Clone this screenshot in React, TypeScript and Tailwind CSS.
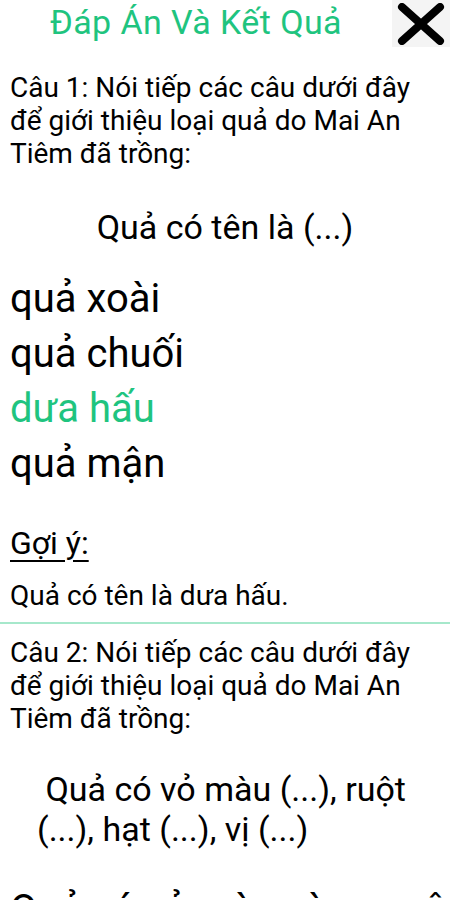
const options = ["quả xoài", "quả chuối", "dưa hấu", "quả mận"];
const correct = "dưa hấu";

function CloseIcon() {
  return (
    <div className="flex h-[47px] w-[58px] items-center justify-center bg-[#f4f4f4]">
      <svg width="50" height="42" viewBox="0 0 50 42">
        <path
          d="M6 4 L44 38 M44 4 L6 38"
          stroke="#000"
          strokeWidth="8"
          strokeLinecap="round"
          fill="none"
        />
      </svg>
    </div>
  );
}

export default function App() {
  return (
    <div className="h-[900px] w-[450px] overflow-hidden bg-white font-['Roboto',sans-serif] text-black">
      <div className="flex h-[47px] items-start">
        <h1 className="flex-1 pt-[2px] text-center text-[34px] leading-[40px] tracking-[0.4px] text-[#1fc47f]">
          Đáp Án Và Kết Quả
        </h1>
        <CloseIcon />
      </div>

      <div className="px-[10px]">
        <p className="mt-[24px] text-[28px] leading-[33px]">
          Câu 1: Nói tiếp các câu dưới đây để giới thiệu loại quả do Mai An Tiêm đã trồng:
        </p>
        <p className="mt-[37px] text-center text-[34px] leading-[40px]">Quả có tên là (...)</p>

        <ul className="mt-[24px]">
          {options.map((o) => (
            <li
              key={o}
              className={`text-[40px] leading-[55px] ${o === correct ? "text-[#1fc47f]" : "text-black"}`}
            >
              {o}
            </li>
          ))}
        </ul>

        <p className="mt-[34px] text-[32px] leading-[37px] underline decoration-2 underline-offset-[6px]">Gợi ý:</p>
        <p className="mt-[17px] text-[28px] leading-[33px]">Quả có tên là dưa hấu.</p>
      </div>

      <div className="mt-[10px] h-[2px] bg-[#a6e8cb]" />

      <div className="px-[10px]">
        <p className="mt-[12px] text-[28px] leading-[33px]">
          Câu 2: Nói tiếp các câu dưới đây để giới thiệu loại quả do Mai An Tiêm đã trồng:
        </p>
        <div className="mt-[34px] flex justify-center">
          <p className="max-w-[376px] text-left text-[34px] leading-[40px]">
            {"\u00A0"}Quả có vỏ màu (...), ruột (...), hạt (...), vị (...)
          </p>
        </div>
        <p className="mt-[33px] whitespace-nowrap text-[40px] leading-[55px]">Quả có vỏ màu vàng, ruột trắng</p>
      </div>
    </div>
  );
}
